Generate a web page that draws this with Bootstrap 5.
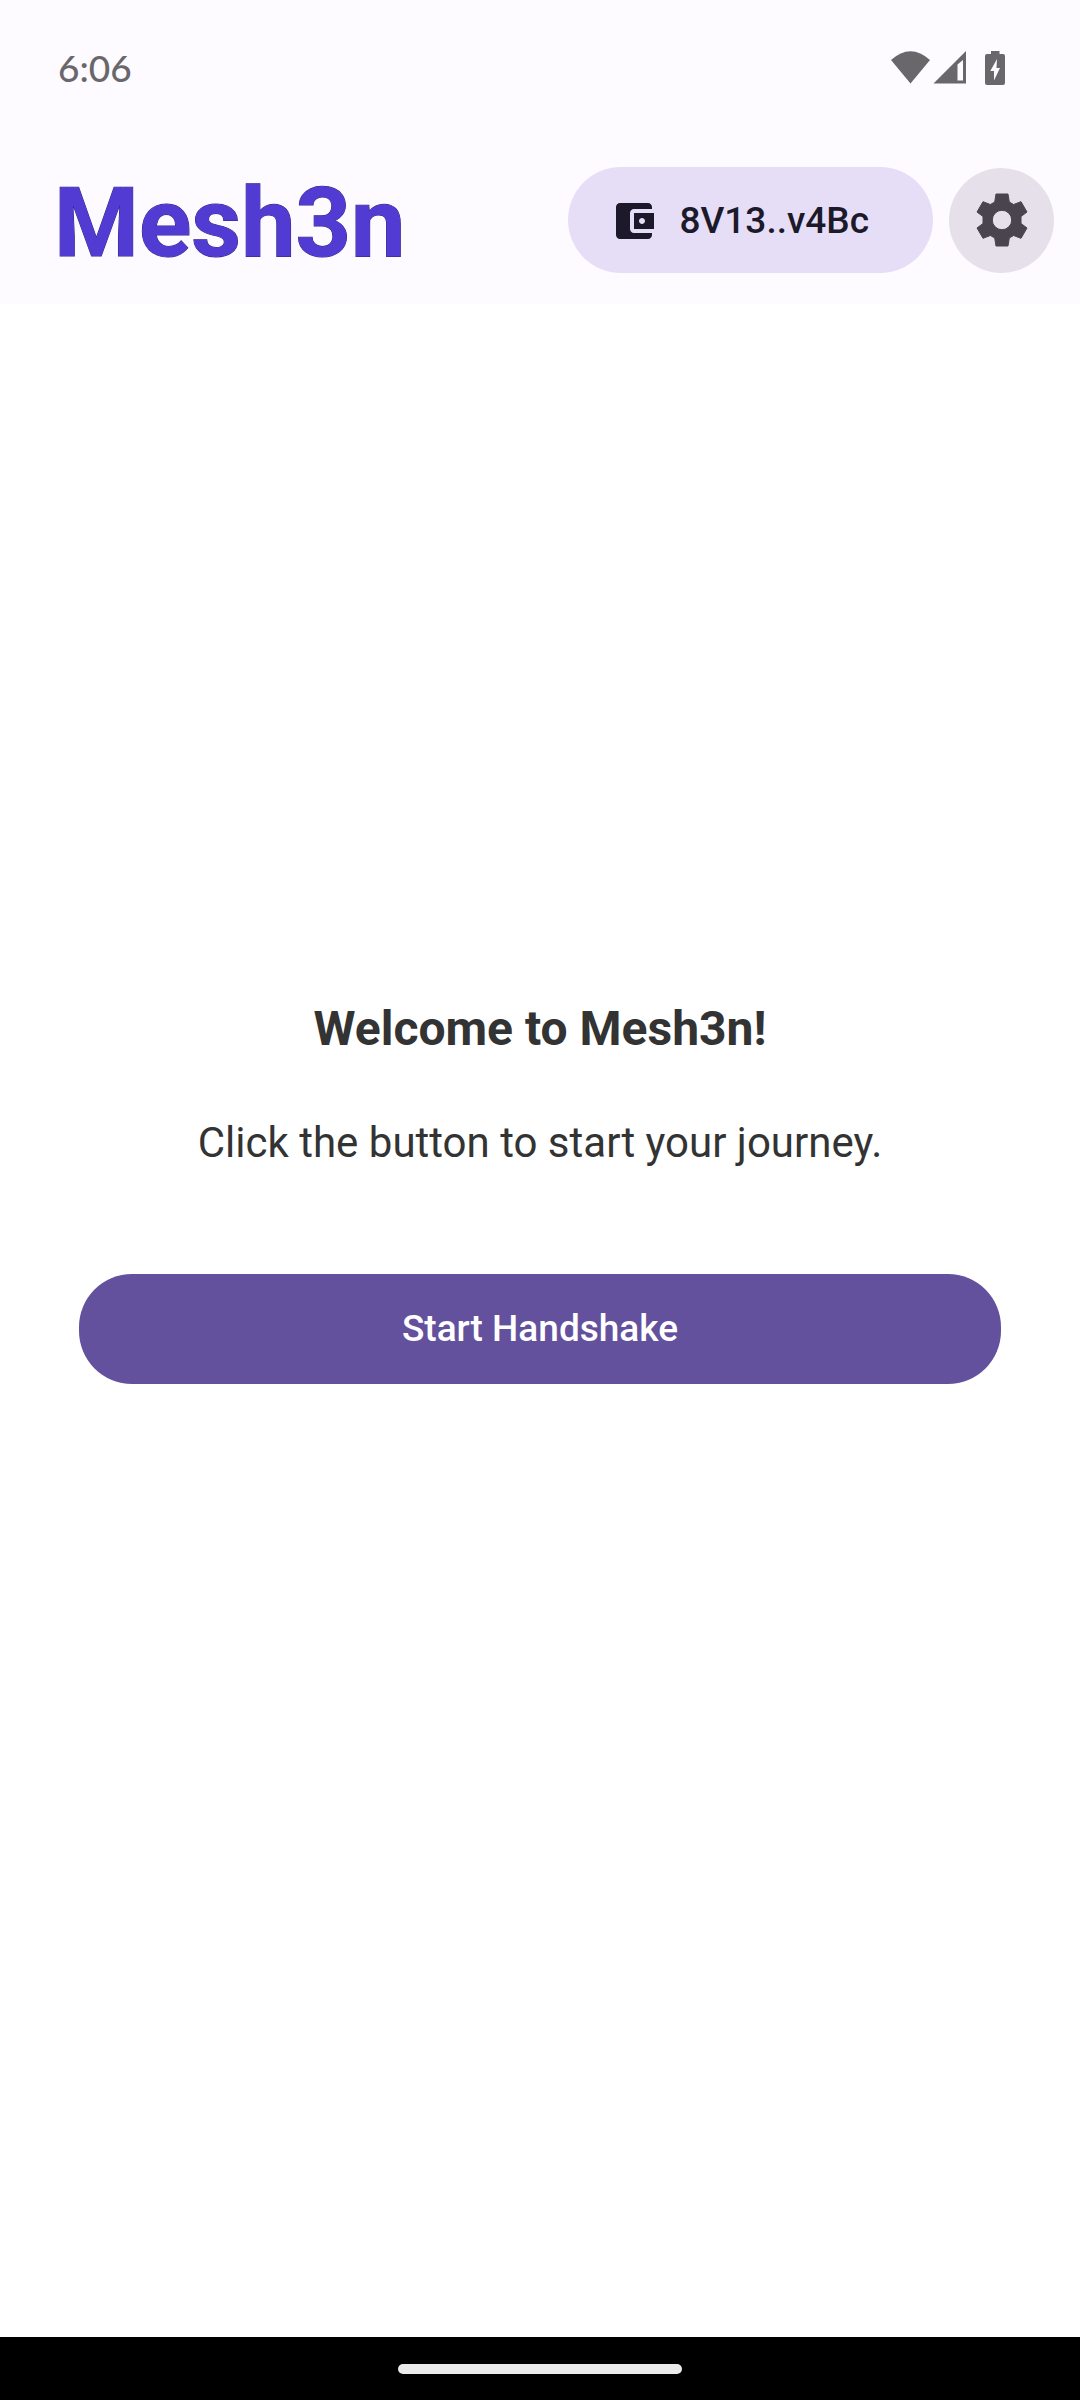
<!DOCTYPE html>
<html lang="en">
<head>
<meta charset="utf-8">
<meta name="viewport" content="width=device-width, initial-scale=1">
<title>Mesh3n</title>
<link href="https://cdn.jsdelivr.net/npm/bootstrap@5.3.0/dist/css/bootstrap.min.css" rel="stylesheet">
<style>
  body { font-family: Roboto, "Liberation Sans", sans-serif; color: #333; background: #fff; }
  .top-area { background: #fdfbff; }
  .status-bar { height: 136px; padding: 0 74px 0 58px; color: #69676a; }
  .clock { font-family: Lato, sans-serif; font-size: 37px; font-weight: 500; line-height: 48px; }
  .app-bar { height: 168px; padding: 0 26px 0 54px; }
  .brand { padding-top: 6px; font-family: Roboto, sans-serif; font-size: 97px; font-weight: 700; line-height: 112px; color: #523bd3; -webkit-text-stroke: 1px #2f2580; paint-order: stroke fill; }
  .wallet-btn { height: 106px; padding: 2px 64px 0 42px; gap: 21px; border: 0; background: #e5def6; color: #1c192b; font-size: 37px; font-weight: 500; }
  .wallet-btn:hover, .wallet-btn:active { background: #dad1f0; color: #1c192b; }
  .gear-btn { width: 105px; height: 105px; border: 0; background: #e5e0ea; color: #48454f; }
  .welcome { padding: 693px 79px 0; }
  .welcome-title { font-size: 48px; font-weight: 700; line-height: 64px; margin-bottom: 50px; }
  .welcome-text { font-size: 42px; line-height: 64px; margin-bottom: 99px; }
  .start-btn { height: 110px; border: 0; border-radius: 53px; background: #64519e; color: #fff; font-size: 37px; font-weight: 500; }
  .start-btn:hover, .start-btn:active { background: #574590; color: #fff; }
  .nav-strip { height: 63px; background: #000; }
  .nav-pill { width: 284px; height: 10px; background: #ebebeb; }
</style>
<script src="https://cdn.jsdelivr.net/npm/bootstrap@5.3.0/dist/js/bootstrap.bundle.min.js" defer></script>
</head>
<body class="d-flex flex-column min-vh-100">
<header class="top-area">
  <div class="status-bar d-flex align-items-center justify-content-between">
    <span class="clock">6:06</span>
    <svg width="116" height="36" viewBox="0 0 116 36" fill="currentColor" role="img" aria-label="Wi-Fi, signal and battery">
      <path d="M1 10Q20.500-7.500 40 10L20.500 33.500Z"/>
      <path fill-rule="evenodd" d="M43.500 33.500 76 1V33.500ZM67.500 30.500H73V10L67.500 14.500Z"/>
      <path fill-rule="evenodd" d="M101 1H109.500V4H113a2 2 0 0 1 2 2V33a2 2 0 0 1-2 2H97a2 2 0 0 1-2-2V6a2 2 0 0 1 2-2H101ZM107 9 100.300 21H104V30.500L110 18H106.500Z"/>
    </svg>
  </div>
  <nav class="app-bar d-flex align-items-center justify-content-between" aria-label="Main">
    <a class="brand text-decoration-none" href="#">Mesh3n</a>
    <div class="d-flex align-items-center gap-3">
      <button type="button" class="wallet-btn btn rounded-pill d-flex align-items-center">
        <svg width="48" height="48" viewBox="0 0 24 24" fill="currentColor" aria-hidden="true"><path d="M21 18v1c0 1.100-.9 2-2 2H5c-1.110 0-2-.9-2-2V5c0-1.100.89-2 2-2h14c1.100 0 2 .9 2 2v1h-9c-1.110 0-2 .9-2 2v8c0 1.100.89 2 2 2h9zm-9-2h10V8H12v8zm4-2.500c-.83 0-1.500-.67-1.500-1.500s.67-1.500 1.500-1.500 1.500.67 1.500 1.500-.67 1.500-1.500 1.500z"/></svg>
        <span>8V13..v4Bc</span>
      </button>
      <button type="button" class="gear-btn btn rounded-circle p-0 d-flex align-items-center justify-content-center" aria-label="Settings">
        <svg width="56" height="56" viewBox="-28 -28 56 56" aria-hidden="true">
          <path fill="currentColor" stroke="currentColor" stroke-linejoin="round" fill-rule="evenodd" d="M-6-26H6L7.300-18 11.600-15.500 19-18.300 25-8 19-3.500V3.500L25 8 19 18.300 11.600 15.500 7.300 18 6 26H-6L-7.300 18-11.600 15.500-19 18.300-25 8-19 3.500V-3.500L-25-8-19-18.300-11.600-15.500-7.300-18ZM9.700 0A9.700 9.700 0 1 0-9.700 0A9.700 9.700 0 1 0 9.700 0Z"/>
        </svg>
      </button>
    </div>
  </nav>
</header>
<main class="welcome flex-grow-1 text-center">
  <h1 class="welcome-title">Welcome to Mesh3n!</h1>
  <p class="welcome-text">Click the button to start your journey.</p>
  <button type="button" class="start-btn btn w-100">Start Handshake</button>
</main>
<footer class="nav-strip d-flex align-items-center justify-content-center">
  <div class="nav-pill rounded-pill"></div>
</footer>
</body>
</html>
